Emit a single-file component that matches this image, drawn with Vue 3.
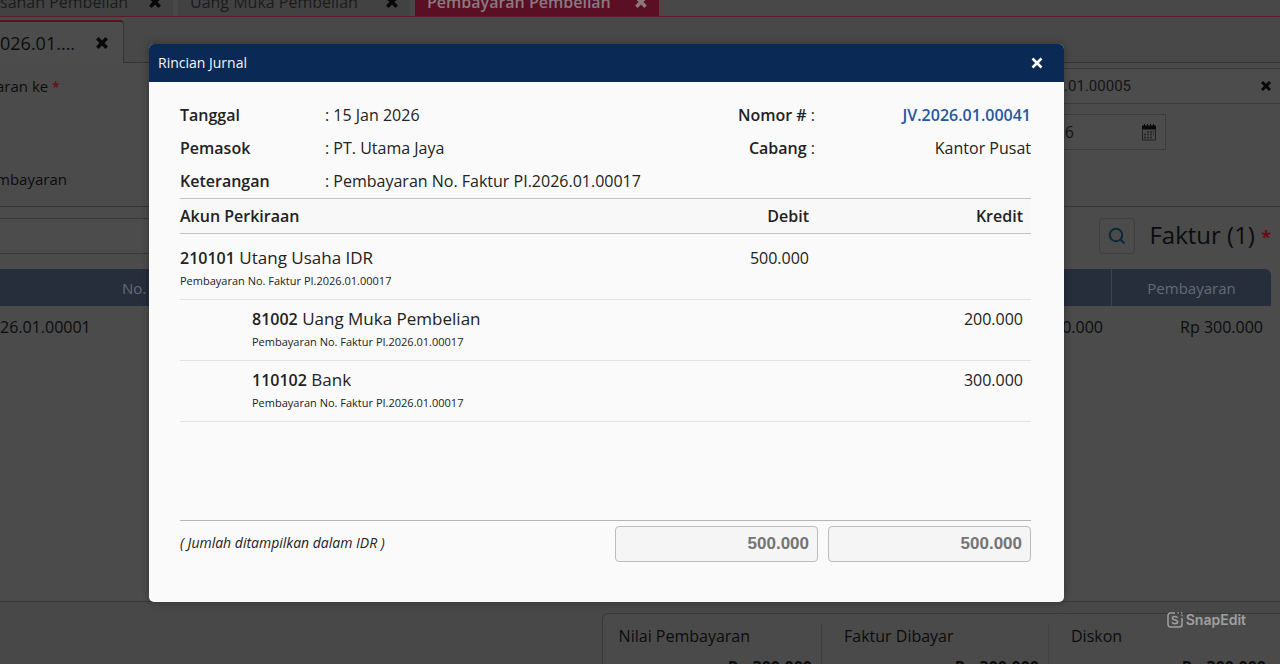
<script setup>
const tabs = [
  { title: 'sanan Pembelian', active: false },
  { title: 'Uang Muka Pembelian', active: false },
  { title: 'Pembayaran Pembelian', active: true },
]

const entries = [
  { code: '210101', name: 'Utang Usaha IDR', debit: '500.000', credit: '' },
  { code: '81002', name: 'Uang Muka Pembelian', debit: '', credit: '200.000' },
  { code: '110102', name: 'Bank', debit: '', credit: '300.000' },
]
const memo = 'Pembayaran No. Faktur PI.2026.01.00017'

const summary = ['Nilai Pembayaran', 'Faktur Dibayar', 'Diskon']
</script>

<template>
  <div class="app">
    <main class="page">
      <nav class="tabs" aria-label="Modul">
        <div v-for="t in tabs" :key="t.title" class="tab" :class="{ active: t.active }">
          <span>{{ t.title }}</span>
          <button type="button" class="cross" aria-label="Tutup tab">
            <svg viewBox="0 0 12 12" width="14" height="14"><path d="M2 2l8 8M10 2l-8 8" /></svg>
          </button>
        </div>
      </nav>

      <div class="subtabs">
        <div class="subtab">
          <span>026.01....</span>
          <button type="button" class="cross" aria-label="Tutup dokumen">
            <svg viewBox="0 0 12 12" width="14" height="14"><path d="M2 2l8 8M10 2l-8 8" /></svg>
          </button>
        </div>
        <div class="rest"></div>
      </div>

      <section class="form">
        <div class="labels">
          <label for="nomor">aran ke <b class="req">*</b></label>
          <label for="tanggal">mbayaran</label>
        </div>
        <div class="fields">
          <div class="field">
            <input id="nomor" class="number" value="2026.01.00005" />
            <button type="button" class="cross" aria-label="Hapus">
              <svg viewBox="0 0 12 12" width="12" height="12"><path d="M2 2l8 8M10 2l-8 8" /></svg>
            </button>
          </div>
          <div class="field date">
            <input id="tanggal" value="15/01/2026" />
            <button type="button" class="calendar" aria-label="Pilih tanggal">
              <svg viewBox="0 0 16 17" width="16" height="17">
                <path d="M1 1.500h14v4H1z" fill="#0a0a0a" />
                <path d="M3.500 0v2M6.500 0v2M9.500 0v2M12.500 0v2" stroke="#0a0a0a" />
                <path d="M1.500 5v11h13V5" fill="none" stroke="#202020" />
                <path d="M6 8h7M3 10.500h10M3 13.500h8" stroke="#222" stroke-width="1.500" stroke-dasharray="2 1" />
              </svg>
            </button>
          </div>
        </div>
      </section>

      <section class="invoices">
        <div class="toolbar">
          <input class="lookup" aria-label="Cari faktur" />
          <button type="button" class="search" aria-label="Cari">
            <svg viewBox="0 0 18 18" width="18" height="18"><circle cx="8" cy="8" r="6.200" /><path d="M12.500 12.500l4 4" /></svg>
          </button>
          <h2>Faktur (1) <b class="req">*</b></h2>
        </div>
        <table class="list">
          <colgroup><col class="c1" /><col /><col class="c3" /><col class="c4" /></colgroup>
          <thead>
            <tr><th></th><th class="left">No.</th><th></th><th>Pembayaran</th></tr>
          </thead>
          <tbody>
            <tr><td>26.01.00001</td><td></td><td class="num">Rp 300.000</td><td class="num">Rp 300.000</td></tr>
          </tbody>
        </table>
      </section>

      <section class="summary">
        <div v-for="s in summary" :key="s" class="total">
          <span>{{ s }}</span>
          <strong>Rp 300.000</strong>
        </div>
      </section>
    </main>

    <div class="overlay">
      <section class="dialog" role="dialog" aria-labelledby="judul">
        <header>
          <h1 id="judul">Rincian Jurnal</h1>
          <button type="button" aria-label="Tutup">
            <svg viewBox="0 0 12 12" width="12" height="12"><path d="M1.500 1.500l9 9M10.500 1.500l-9 9" /></svg>
          </button>
        </header>
        <div class="body">
          <div class="info">
            <b>Tanggal</b><span>: 15 Jan 2026</span>
            <span class="end"><b>Nomor #</b> :</span><a href="#" class="end">JV.2026.01.00041</a>
            <b>Pemasok</b><span>: PT. Utama Jaya</span>
            <span class="end"><b>Cabang</b> :</span><span class="end">Kantor Pusat</span>
            <b>Keterangan</b><span class="wide">: {{ memo }}</span>
          </div>

          <table class="journal">
            <colgroup><col /><col class="amount" /><col class="amount" /></colgroup>
            <thead>
              <tr><th>Akun Perkiraan</th><th class="num">Debit</th><th class="num">Kredit</th></tr>
            </thead>
            <tbody>
              <tr v-for="e in entries" :key="e.code">
                <td :class="{ indent: e.credit }">
                  <div class="account"><b>{{ e.code }}</b> {{ e.name }}</div>
                  <div class="memo">{{ memo }}</div>
                </td>
                <td class="num">{{ e.debit }}</td>
                <td class="num">{{ e.credit }}</td>
              </tr>
            </tbody>
          </table>

          <footer>
            <em>( Jumlah ditampilkan dalam IDR )</em>
            <input aria-label="Total debit" value="500.000" readonly />
            <input aria-label="Total kredit" value="500.000" readonly />
          </footer>
        </div>
      </section>
    </div>

    <div class="mark">
      <svg viewBox="0 0 16 16" width="16" height="16">
        <path d="M8 1H3.500A2.500 2.500 0 0 0 1 3.500v9A2.500 2.500 0 0 0 3.500 15h9a2.500 2.500 0 0 0 2.500-2.500V6" />
        <path d="M10.500 5.800C10 4.800 9 4.400 8 4.400c-1.500 0-2.600.700-2.600 1.800 0 2.500 5.300 1 5.300 3.600 0 1.200-1.200 1.900-2.700 1.900-1.400 0-2.500-.600-2.900-1.700" />
        <path d="M10.500 1h1.300M14 1h1.300M14.400 3.500h1.300" />
      </svg>
      <span>SnapEdit</span>
    </div>
  </div>
</template>

<style>
html,
body {
  height: 100%;
  overflow: hidden;
  background: #484848;
}
#app {
  height: 100%;
}
</style>

<style scoped>
.app {
  position: relative;
  height: 100%;
  overflow: hidden;
  font: 16px/24px "Open Sans", "Noto Sans", sans-serif;
  color: #222;
}
.app * {
  box-sizing: border-box;
}
button {
  display: flex;
  align-items: center;
  justify-content: center;
  padding: 0;
  border: 0;
  background: none;
}
input {
  font: inherit;
  min-width: 0;
}
b {
  font-weight: 600;
}
.page {
  display: flex;
  flex-direction: column;
  height: 100%;
  overflow: hidden;
  background: #484848;
  color: #0c0c0c;
}
.cross svg {
  fill: none;
  stroke: #080808;
  stroke-width: 3;
}
.req {
  color: #6b0c12;
}

.tabs {
  display: flex;
  align-items: flex-end;
  gap: 5px;
  flex: none;
  height: 17px;
  overflow: hidden;
  border-bottom: 1px solid #5b1c2b;
}
.tab {
  display: flex;
  align-items: center;
  justify-content: space-between;
  height: 28px;
  width: 232px;
  padding: 0 11px 0 12px;
  background: #424242;
  color: #1a1a1a;
}
.tab:first-child {
  width: 173px;
  padding-left: 0;
}
.tab.active {
  width: 244px;
  background: #5a0f25;
  color: #8a7a7f;
  font-weight: 600;
}
.tab.active svg {
  stroke: #8a7a7f;
}

.subtabs {
  display: flex;
  flex: none;
  height: 46px;
  padding-top: 3px;
}
.subtab {
  display: flex;
  align-items: center;
  justify-content: space-between;
  width: 124px;
  padding-right: 14px;
  border-top: 2px solid #5a0f25;
  border-right: 1px solid #333;
  border-radius: 0 4px 0 0;
  background: #4c4c4c;
  font-size: 18px;
}
.rest {
  flex: 1;
  border-bottom: 1px solid #333;
}

.form {
  display: flex;
  justify-content: space-between;
  flex: none;
  height: 143px;
  padding-top: 5px;
  background: #4b4b4b;
}
.labels {
  display: flex;
  flex-direction: column;
  justify-content: space-between;
  margin-left: -4px;
  padding: 6px 0 15px;
  font-size: 15px;
}
.labels .req {
  font-size: 14px;
}
.fields {
  display: flex;
  flex-direction: column;
  gap: 10px;
  width: 320px;
}
.field {
  display: flex;
  align-items: center;
  height: 36px;
  padding-right: 8px;
  border: 1px solid #3a3a3a;
  border-right: 0;
  background: #4c4c4c;
}
.field input {
  flex: 1;
  padding: 0;
  border: 0;
  background: none;
  color: #141414;
  text-align: right;
}
.field .number {
  padding-right: 129px;
  font: 15px/20px Roboto, sans-serif;
}
.field.date {
  width: 206px;
  border-right: 1px solid #3a3a3a;
}
.field.date input {
  padding-right: 67px;
}

.invoices {
  flex: none;
  height: 396px;
  padding: 11px 9px 0 0;
  border-top: 1px solid #363636;
  border-bottom: 1px solid #373737;
  background: #4b4b4b;
}
.toolbar {
  display: flex;
  align-items: center;
  height: 36px;
}
.lookup {
  width: 480px;
  height: 36px;
  margin-right: auto;
  border: 1px solid #383838;
  border-left: 0;
  background: #4c4c4c;
}
.search {
  width: 36px;
  height: 36px;
  margin-right: 14px;
  border: 1px solid #3b3f42;
  border-radius: 4px;
}
.search svg {
  fill: none;
  stroke: #0c2836;
  stroke-width: 2;
}
.toolbar h2 {
  margin: 0;
  font-size: 24px;
  line-height: 36px;
  font-weight: 400;
}
.toolbar .req {
  font-size: 18px;
  font-weight: 700;
}
.list {
  width: 100%;
  margin-top: 15px;
  border-spacing: 0;
  table-layout: fixed;
}
.list .c1 {
  width: 114px;
}
.list .c3,
.list .c4 {
  width: 160px;
}
.list th {
  height: 37px;
  padding: 0 8px;
  background: #262e3c;
  color: #646a74;
  font-size: 15px;
  font-weight: 400;
}
.list th.left {
  text-align: left;
}
.list th:last-child {
  border-left: 1px solid #3c424d;
  border-radius: 0 6px 0 0;
}
.list td {
  height: 42px;
  padding: 0;
}
.list td.num {
  padding-right: 8px;
  text-align: right;
}

.summary {
  display: grid;
  grid-template-columns: 1fr 227px 227px;
  flex: none;
  align-self: flex-end;
  width: 53%;
  height: 80px;
  margin-top: 11px;
  padding: 10px 5px 10px 0;
  border: 1px solid #383838;
  border-right: 0;
  border-radius: 6px 0 0 0;
  background: #4a4a4a;
}
.total {
  display: flex;
  flex-direction: column;
  gap: 7px;
  padding: 0 9px 0 16px;
}
.total + .total {
  padding-left: 22px;
  border-left: 1px solid #404040;
}
.total strong {
  text-align: right;
}

.overlay {
  position: absolute;
  inset: 0;
  display: flex;
  padding: 44px 216px 62px 149px;
}
.dialog {
  display: flex;
  flex: 1;
  flex-direction: column;
  overflow: hidden;
  border-radius: 5px;
  background: #fafafa;
  box-shadow: 0 0 8px rgba(0, 0, 0, 0.3);
}
.dialog header {
  display: flex;
  align-items: center;
  justify-content: space-between;
  flex: none;
  height: 38px;
  padding: 0 21px 0 9px;
  background: #0a2a55;
  color: #f4f6fa;
}
.dialog h1 {
  margin: 0;
  font-size: 14px;
  font-weight: 400;
}
.dialog header svg {
  fill: none;
  stroke: #fff;
  stroke-width: 2.500;
}
.body {
  display: flex;
  flex: 1;
  flex-direction: column;
  padding: 17px 33px 40px 31px;
}
.info {
  display: grid;
  grid-template-columns: 145px 1fr 120px 216px;
  line-height: 33px;
}
.wide {
  grid-column: 2 / -1;
}
.end {
  text-align: right;
}
.info a {
  color: #2457a0;
  font-weight: 600;
  text-decoration: none;
}
.journal {
  width: 100%;
  border-spacing: 0;
  table-layout: fixed;
}
.journal .amount {
  width: 214px;
}
.journal th {
  height: 36px;
  padding: 0;
  border: solid #c2c4c6;
  border-width: 1px 0;
  background: #f8f8f8;
  font-weight: 600;
  text-align: left;
}
.journal td {
  padding: 7px 0;
  border-bottom: 1px solid #e2e2e2;
  vertical-align: top;
}
.journal tbody tr:first-child td {
  padding-top: 12px;
}
.journal td.indent {
  padding-left: 72px;
}
.journal .num {
  padding-right: 8px;
  text-align: right;
}
.account {
  font-size: 17px;
}
.account b {
  font-size: 16px;
}
.memo {
  font-size: 11px;
  line-height: 22px;
}
.dialog footer {
  display: flex;
  gap: 10px;
  margin-top: auto;
  padding-top: 5px;
  border-top: 1px solid #b4b6b8;
}
.dialog em {
  flex: 1;
  font-size: 14px;
  line-height: 34px;
}
.dialog footer input {
  width: 203px;
  height: 36px;
  padding: 0 8px;
  border: 1px solid #bcbcbc;
  border-radius: 4px;
  background: #f5f5f5;
  color: #747474;
  font: 700 17px/24px "Liberation Sans", sans-serif;
  text-align: right;
}

.mark {
  position: absolute;
  right: 34px;
  bottom: 34px;
  display: flex;
  align-items: center;
  gap: 3px;
  color: #a0a0a0;
  font: 600 14px/20px Inter, sans-serif;
}
.mark svg {
  fill: none;
  stroke: #a0a0a0;
  stroke-width: 1.500;
}
</style>
